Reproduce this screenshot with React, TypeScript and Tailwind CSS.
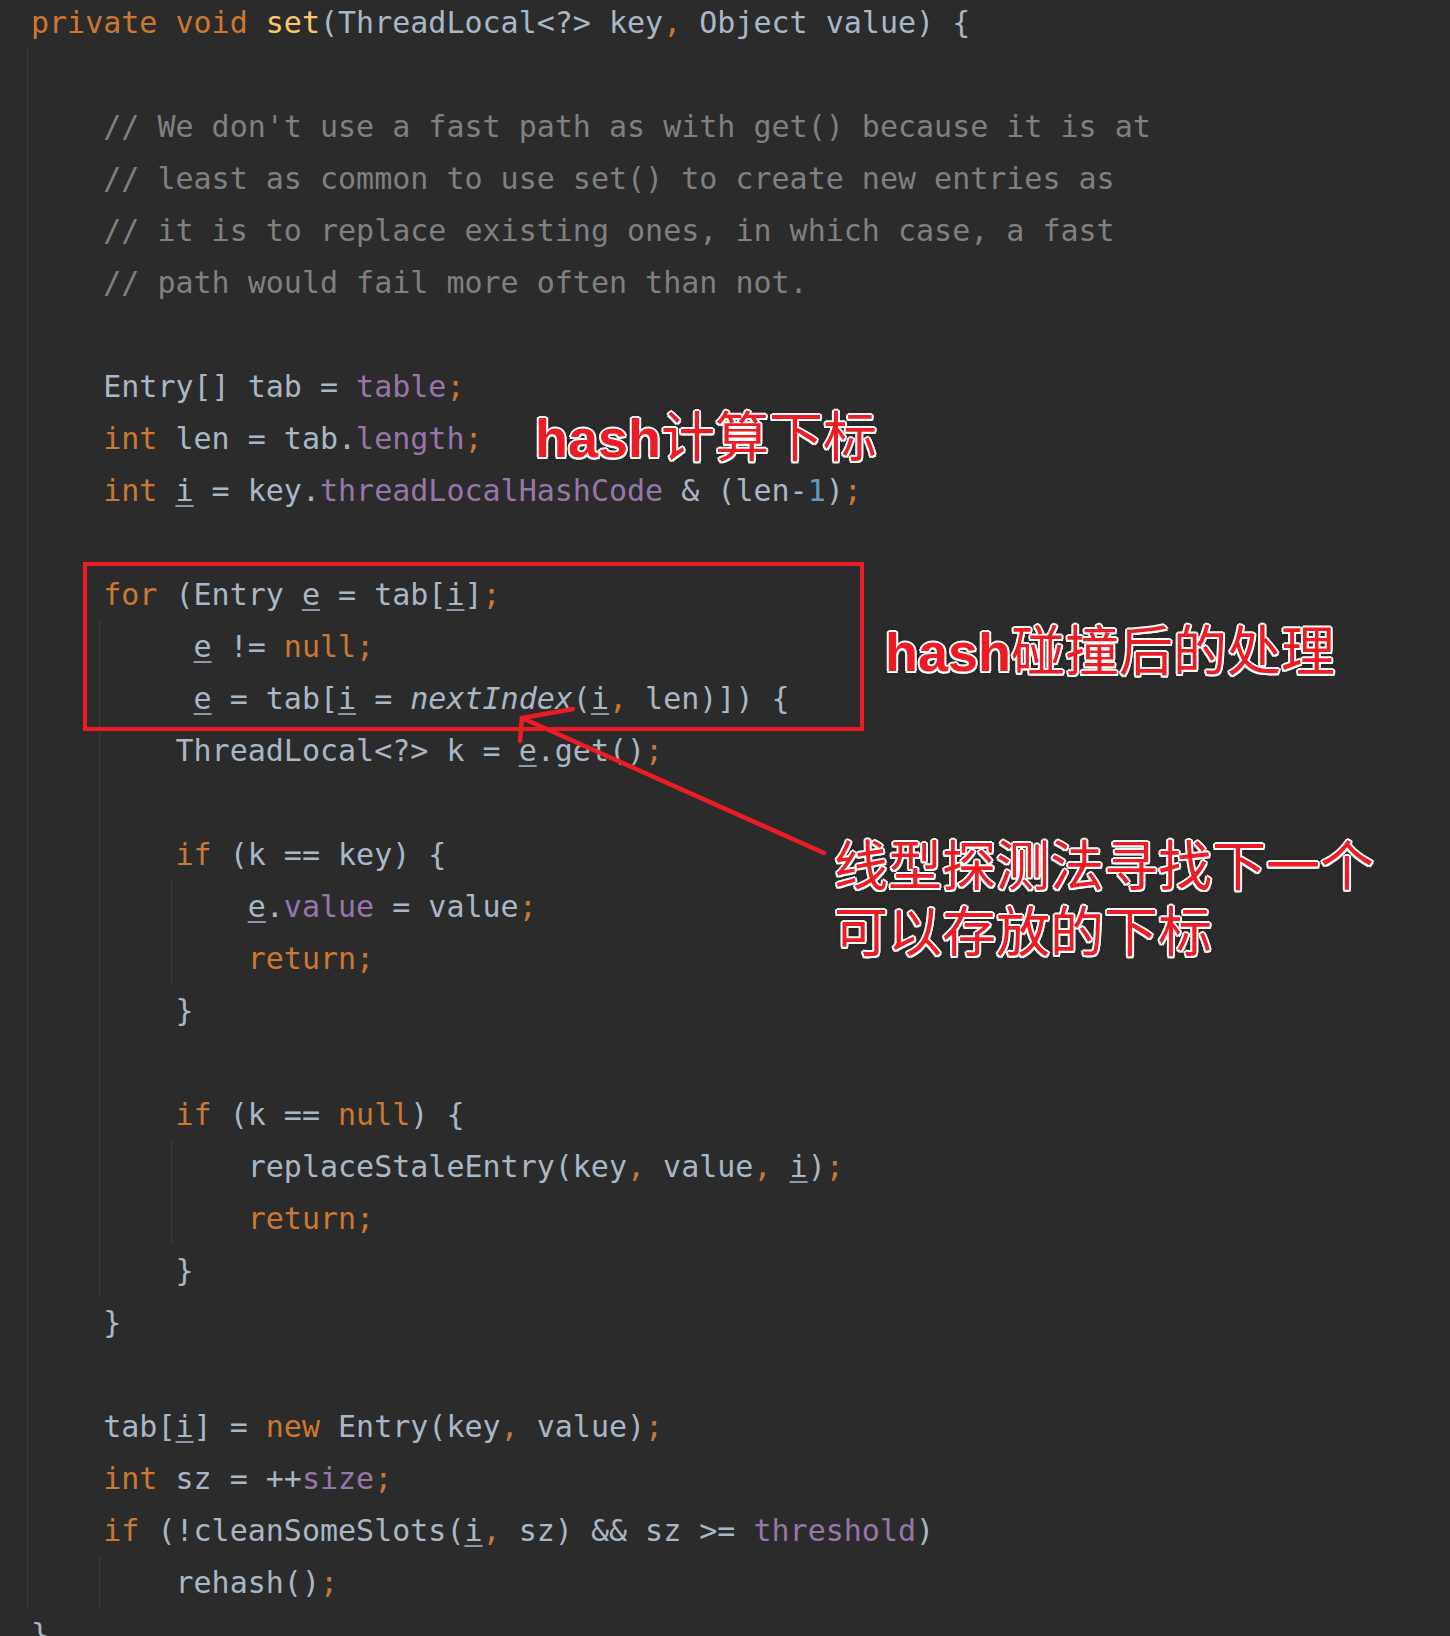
import React from "react";

type Kids = { children?: React.ReactNode };

// token colours (Darcula)
const K = ({ children }: Kids) => <span className="text-[#cc7832]">{children}</span>;
const P = ({ children }: Kids) => <span className="text-[#9876aa]">{children}</span>;
const N = ({ children }: Kids) => <span className="text-[#6897bb]">{children}</span>;
const Y = ({ children }: Kids) => <span className="text-[#ffc66d]">{children}</span>;
const C = ({ children }: Kids) => <span className="text-[#808080]">{children}</span>;
const It = ({ children }: Kids) => <span className="italic">{children}</span>;
const U = ({ children }: Kids) => (
  <span className="underline decoration-[#8e9aa8] decoration-2 underline-offset-[4px]">
    {children}
  </span>
);

const Line = ({ children }: Kids) => (
  <div className="h-[52px] whitespace-pre">{children}</div>
);

const Blank = () => <div className="h-[52px]" />;

// indent guide block: guide line just left of the parent column, content 4 columns in
const Block = ({ children }: Kids) => (
  <div className="-ml-[4px] border-l border-[#3c3c3c] pl-[calc(4ch+3px)]">
    {children}
  </div>
);

const outline =
  "[text-shadow:-1.5px_-1.5px_0_#fff,1.5px_-1.5px_0_#fff,-1.5px_1.5px_0_#fff,1.5px_1.5px_0_#fff,0_-2px_0_#fff,0_2px_0_#fff,-2px_0_0_#fff,2px_0_0_#fff,0_0_4px_rgba(0,0,0,0.6)]";

export default function App() {
  return (
    <div className="relative h-[1636px] w-full overflow-hidden bg-[#2b2b2b]">
      <div className="-mt-[3px] pl-[31px] font-['DejaVu_Sans_Mono',monospace] text-[30px] leading-[52px] text-[#a9b7c6]">
        <Line>
          <K>private void </K>
          <Y>set</Y>(ThreadLocal&lt;?&gt; key<K>,</K> Object value) {"{"}
        </Line>
        <Block>
          <Blank />
          <Line>
            <C>// We don't use a fast path as with get() because it is at</C>
          </Line>
          <Line>
            <C>// least as common to use set() to create new entries as</C>
          </Line>
          <Line>
            <C>// it is to replace existing ones, in which case, a fast</C>
          </Line>
          <Line>
            <C>// path would fail more often than not.</C>
          </Line>
          <Blank />
          <Line>
            Entry[] tab = <P>table</P>
            <K>;</K>
          </Line>
          <Line>
            <K>int</K> len = tab.<P>length</P>
            <K>;</K>
          </Line>
          <Line>
            <K>int</K> <U>i</U> = key.<P>threadLocalHashCode</P> &amp; (len-<N>1</N>)
            <K>;</K>
          </Line>
          <Blank />
          <Line>
            <K>for</K> (Entry <U>e</U> = tab[<U>i</U>]<K>;</K>
          </Line>
          <Block>
            <Line>
              {" "}
              <U>e</U> != <K>null;</K>
            </Line>
            <Line>
              {" "}
              <U>e</U> = tab[<U>i</U> = <It>nextIndex</It>(<U>i</U>
              <K>,</K> len)]) {"{"}
            </Line>
            <Line>
              ThreadLocal&lt;?&gt; k = <U>e</U>.get()<K>;</K>
            </Line>
            <Blank />
            <Line>
              <K>if</K> (k == key) {"{"}
            </Line>
            <Block>
              <Line>
                <U>e</U>.<P>value</P> = value<K>;</K>
              </Line>
              <Line>
                <K>return;</K>
              </Line>
            </Block>
            <Line>{"}"}</Line>
            <Blank />
            <Line>
              <K>if</K> (k == <K>null</K>) {"{"}
            </Line>
            <Block>
              <Line>
                replaceStaleEntry(key<K>,</K> value<K>,</K> <U>i</U>)<K>;</K>
              </Line>
              <Line>
                <K>return;</K>
              </Line>
            </Block>
            <Line>{"}"}</Line>
          </Block>
          <Line>{"}"}</Line>
          <Blank />
          <Line>
            tab[<U>i</U>] = <K>new</K> Entry(key<K>,</K> value)<K>;</K>
          </Line>
          <Line>
            <K>int</K> sz = ++<P>size</P>
            <K>;</K>
          </Line>
          <Line>
            <K>if</K> (!cleanSomeSlots(<U>i</U>
            <K>,</K> sz) &amp;&amp; sz &gt;= <P>threshold</P>)
          </Line>
          <Block>
            <Line>
              rehash()<K>;</K>
            </Line>
          </Block>
        </Block>
        <Line>{"}"}</Line>
      </div>

      {/* annotations drawn on top of the screenshot */}
      <div className="absolute left-[83px] top-[562px] h-[169px] w-[781px] border-4 border-[#ed1c24]" />

      <svg
        className="absolute left-0 top-0"
        width="1450"
        height="1636"
        viewBox="0 0 1450 1636"
        fill="none"
      >
        <g stroke="#ed1c24" strokeWidth="4.5" strokeLinecap="round">
          <line x1="824" y1="853" x2="522" y2="718" />
          <line x1="522" y1="718" x2="573" y2="709" />
          <line x1="522" y1="718" x2="520" y2="741" />
        </g>
      </svg>

      <div
        className={`absolute left-[535px] top-[411px] whitespace-nowrap font-['Liberation_Sans','Noto_Sans_CJK_SC',sans-serif] text-[54px] leading-[54px] text-[#ed1c24] ${outline}`}
      >
        <span className="font-bold">hash</span>
        <span className="font-normal">计算下标</span>
      </div>

      <div
        className={`absolute left-[885px] top-[625px] whitespace-nowrap font-['Liberation_Sans','Noto_Sans_CJK_SC',sans-serif] text-[54px] leading-[54px] text-[#ed1c24] ${outline}`}
      >
        <span className="font-bold">hash</span>
        <span className="font-normal">碰撞后的处理</span>
      </div>

      <div
        className={`absolute left-[834px] top-[835px] font-['Liberation_Sans','Noto_Sans_CJK_SC',sans-serif] text-[54px] font-normal leading-[65.5px] text-[#ed1c24] ${outline}`}
      >
        <div>线型探测法寻找下一个</div>
        <div>可以存放的下标</div>
      </div>
    </div>
  );
}
